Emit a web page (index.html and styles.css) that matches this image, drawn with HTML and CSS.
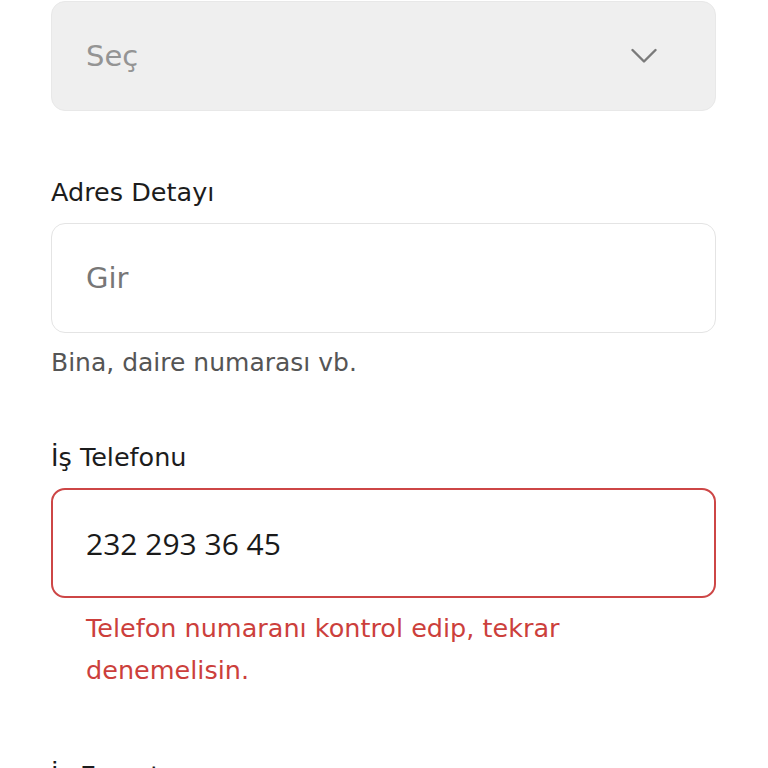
FILE: index.html
```html
<!DOCTYPE html>
<html lang="tr">
<head>
    <meta charset="UTF-8">
    <meta name="viewport" content="width=device-width, initial-scale=1.0">
    <title>Adres Bilgileri</title>
    <link rel="stylesheet" href="styles.css">
</head>
<body>
    <div class="form">
        <div class="field-box select-box">
            <span class="placeholder light">Seç</span>
            <svg class="chevron" width="26" height="16" viewBox="0 0 26 16">
                <path d="M1.5 2 L13 13.5 L24.5 2" fill="none" stroke="#7a7a7a" stroke-width="2.4" stroke-linecap="round" stroke-linejoin="round"/>
            </svg>
        </div>

        <label class="label first">Adres Detayı</label>
        <div class="field-box input-box">
            <span class="placeholder">Gir</span>
        </div>
        <p class="helper">Bina, daire numarası vb.</p>

        <label class="label">İş Telefonu</label>
        <div class="field-box input-box error">
            <span class="value">232 293 36 45</span>
        </div>
        <p class="error-text">Telefon numaranı kontrol edip, tekrar denemelisin.</p>

        <label class="label last">İş E-posta</label>
    </div>
</body>
</html>
```

FILE: styles.css
```css
body {
    margin: 0;
    background: #fff;
    font-family: "DejaVu Sans", "Open Sans", sans-serif;
    color: #1c1c1c;
}
.form {
    display: flex;
    flex-direction: column;
    padding: 1px 52px 0 51px;
}
.field-box {
    box-sizing: border-box;
    height: 110px;
    border-radius: 14px;
    display: flex;
    align-items: center;
    justify-content: space-between;
    padding: 0 58px 0 34px;
}
.select-box {
    background: #efefef;
    border: 1px solid #e8e8e8;
}
.input-box {
    background: #fff;
    border: 1.5px solid #e4e4e4;
}
.input-box.error {
    border: 2px solid #cd4646;
    padding-left: 33px;
}
.placeholder {
    font-size: 29px;
    color: #777;
}
.placeholder.light {
    color: #949494;
}
.value {
    font-family: "Open Sans", sans-serif;
    font-size: 30px;
    color: #1a1a1a;
}
.label {
    font-size: 25.5px;
    line-height: 32px;
    margin: 62px 0 15px;
}
.label.first {
    margin-top: 65px;
}
.label.last {
    margin-top: 68px;
}
.helper {
    margin: 14px 0 0;
    font-size: 25px;
    line-height: 32px;
    color: #555;
}
.error-text {
    margin: 9px 0 0;
    padding: 0 0 0 35px;
    max-width: 560px;
    font-size: 25.5px;
    line-height: 42px;
    color: #cc3f3c;
}
```
